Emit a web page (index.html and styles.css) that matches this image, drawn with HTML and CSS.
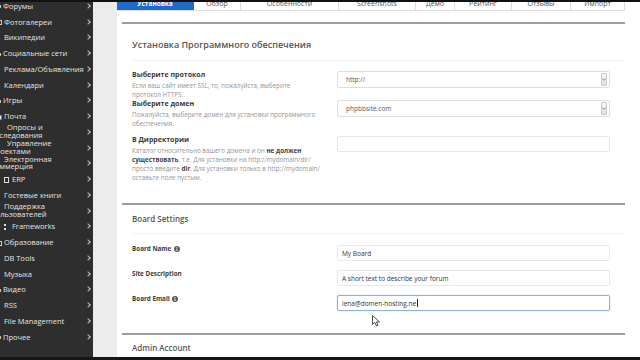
FILE: index.html
```html
<!DOCTYPE html>
<html lang="ru">
<head>
    <meta charset="UTF-8">
    <meta name="viewport" content="width=device-width, initial-scale=1.0">
    <title>Установка Программного обеспечения</title>
    <link rel="stylesheet" href="styles.css">
</head>
<body>
    <div class="topbar"></div>
    <div class="main">
        <div class="sidebar">
            <ul class="menu">
                <li class="item"><span class="txt ind"><i class="ic dot"></i>Форумы</span><span class="chev"></span></li>
                <li class="item"><span class="txt ind"><i class="ic sq"></i>Фотогалереи</span><span class="chev"></span></li>
                <li class="item"><span class="txt">Википедии</span><span class="chev"></span></li>
                <li class="item"><span class="txt ind"><i class="ic dot"></i>Социальные сети</span><span class="chev"></span></li>
                <li class="item"><span class="txt">Реклама/Объявления</span><span class="chev"></span></li>
                <li class="item"><span class="txt">Календари</span><span class="chev"></span></li>
                <li class="item"><span class="txt ind"><i class="ic dot"></i>Игры</span><span class="chev"></span></li>
                <li class="item"><span class="txt ind"><i class="ic sq red"></i>Почта</span><span class="chev"></span></li>
                <li class="item"><span class="txt two wide">Опросы и<br>исследования</span><span class="chev"></span></li>
                <li class="item"><span class="txt two wide">Управление<br>проектами</span><span class="chev"></span></li>
                <li class="item"><span class="txt two">Электронная<br>коммерция</span><span class="chev"></span></li>
                <li class="item"><span class="txt far"><i class="ic box"></i>ERP</span><span class="chev"></span></li>
                <li class="item"><span class="txt">Гостевые книги</span><span class="chev"></span></li>
                <li class="item"><span class="txt two">Поддержка<br>пользователей</span><span class="chev"></span></li>
                <li class="item"><span class="txt far"><i class="ic bars"></i>Frameworks</span><span class="chev"></span></li>
                <li class="item"><span class="txt ind"><i class="ic sq"></i>Образование</span><span class="chev"></span></li>
                <li class="item"><span class="txt">DB Tools</span><span class="chev"></span></li>
                <li class="item"><span class="txt">Музыка</span><span class="chev"></span></li>
                <li class="item"><span class="txt ind"><i class="ic dot"></i>Видео</span><span class="chev"></span></li>
                <li class="item"><span class="txt">RSS</span><span class="chev"></span></li>
                <li class="item"><span class="txt">File Management</span><span class="chev"></span></li>
                <li class="item"><span class="txt ind"><i class="ic dot"></i>Прочее</span><span class="chev"></span></li>
            </ul>
        </div>
        <div class="gutter"></div>
        <div class="panel">
            <ul class="tabs">
                <li class="tab active">Установка</li>
                <li class="tab">Обзор</li>
                <li class="tab">Особенности</li>
                <li class="tab">Screenshots</li>
                <li class="tab">Демо</li>
                <li class="tab">Рейтинг</li>
                <li class="tab">Отзывы</li>
                <li class="tab">Импорт</li>
            </ul>

            <div class="section">
                <div class="section-head">Установка Программного обеспечения</div>
                <div class="rows">
                    <div class="row">
                        <div>
                            <div class="lbl">Выберите протокол</div>
                            <div class="desc">Если ваш сайт имеет SSL, то, пожалуйста, выберите<br>протокол HTTPS.</div>
                        </div>
                        <div class="field select">http://<span class="arrow"><svg width="4" height="3" viewBox="0 0 4 3"><path d="M0.3 0.5 L2 2.4 L3.7 0.5" fill="none" stroke="#777" stroke-width="0.8"/></svg></span></div>
                    </div>
                    <div class="row">
                        <div>
                            <div class="lbl">Выберите домен</div>
                            <div class="desc">Пожалуйста, выберите домен для установки программного<br>обеспечения.</div>
                        </div>
                        <div class="field select">phpbbsite.com<span class="arrow"><svg width="4" height="3" viewBox="0 0 4 3"><path d="M0.3 0.5 L2 2.4 L3.7 0.5" fill="none" stroke="#777" stroke-width="0.8"/></svg></span></div>
                    </div>
                    <div class="row spaced">
                        <div>
                            <div class="lbl">В Дирректории</div>
                            <div class="desc">Каталог относительно вашего домена и он <b>не должен</b><br><b>существовать</b>, т.е. Для установки на http://mydomain/dir/<br>просто введите <b>dir</b>. Для установки только в http://mydomain/<br>оставьте поле пустым.</div>
                        </div>
                        <div class="field input"></div>
                    </div>
                </div>
            </div>

            <div class="section board">
                <div class="section-head compact">Board Settings</div>
                <div class="rows fixed">
                    <div class="row">
                        <div class="lbl latin">Board Name <svg class="info" width="6" height="6" viewBox="0 0 6 6"><circle cx="3" cy="3" r="3" fill="#5a5a5a"/><rect x="2.5" y="2.5" width="1" height="2.4" fill="#fff"/><circle cx="3" cy="1.5" r="0.55" fill="#fff"/></svg></div>
                        <div class="field input">My Board</div>
                    </div>
                    <div class="row">
                        <div class="lbl latin">Site Description</div>
                        <div class="field input">A short text to describe your forum</div>
                    </div>
                    <div class="row">
                        <div class="lbl latin">Board Email <svg class="info" width="6" height="6" viewBox="0 0 6 6"><circle cx="3" cy="3" r="3" fill="#5a5a5a"/><rect x="2.5" y="2.5" width="1" height="2.4" fill="#fff"/><circle cx="3" cy="1.5" r="0.55" fill="#fff"/></svg></div>
                        <div class="field input focus">lena@domen-hosting.ne<span class="caret"></span></div>
                    </div>
                </div>
            </div>

            <div class="section">
                <div class="section-head last">Admin Account</div>
            </div>
        </div>
    </div>
    <div class="bottombar"></div>

    <svg class="cursor" width="9" height="12" viewBox="0 0 9 12"><path d="M0.5 0.5 L0.5 9.5 L2.8 7.4 L4.5 11 L6 10.3 L4.4 6.9 L7.5 6.9 Z" fill="#fff" stroke="#222" stroke-width="0.8" stroke-linejoin="round"/></svg>
</body>
</html>
```

FILE: styles.css
```css
* {
    box-sizing: border-box;
}
body {
    margin: 0;
    width: 640px;
    height: 360px;
    overflow: hidden;
    position: relative;
    background: #111;
    font-family: "Open Sans", "DejaVu Sans", sans-serif;
}
.topbar {
    height: 2px;
    background: #111;
}
.bottombar {
    height: 3px;
    background: #151515;
}
.main {
    display: flex;
    height: 355px;
    overflow: hidden;
    background: #ececec;
}

/* sidebar */
.sidebar {
    flex: 0 0 93px;
    background: #2e2e2e;
    overflow: hidden;
}
.menu {
    list-style: none;
    margin: -4px 0 0 -9px;
    padding: 0;
    width: 102px;
}
.item {
    display: flex;
    align-items: center;
    height: 15.75px;
    color: #e4e4e4;
    font-size: 7.5px;
}
.item .txt {
    flex: 1;
    line-height: 8px;
    white-space: nowrap;
    text-indent: 13px;
}
.item .txt.two {
    line-height: 7.5px;
}
.item .txt.ind {
    text-indent: 8px;
}
.item .txt.wide {
    text-indent: 16px;
}
.item .txt.far {
    text-indent: 13px;
}
.ic {
    display: inline-block;
    vertical-align: middle;
    text-indent: 0;
    margin-right: 2px;
}
.ic.dot {
    width: 2px;
    height: 3px;
    background: #ddd;
    border-radius: 1px;
}
.ic.sq {
    width: 3px;
    height: 5px;
    border: 1px solid #ccc;
}
.ic.red {
    border-color: #c55;
    background: #eee;
}
.ic.box {
    width: 5px;
    height: 6px;
    border: 1px solid #ddd;
    margin-right: 3px;
}
.ic.bars {
    width: 5px;
    height: 6px;
    border-left: 2px dotted #ddd;
    margin-right: 3px;
}
.chev {
    width: 4px;
    height: 4px;
    border-top: 1px solid #bdbdbd;
    border-right: 1px solid #bdbdbd;
    transform: rotate(45deg);
    margin-right: 3px;
}

.gutter {
    flex: 0 0 24px;
}

/* content panel */
.panel {
    flex: 0 0 519px;
    background: #fff;
    border-right: 1px solid #c9c9c9;
    padding: 0 15px 0 5px;
}
.tabs {
    display: grid;
    grid-template-columns: 77px 47px 98px 77px 39px 57px 59px 54px;
    list-style: none;
    margin: -5px 0 11px -5px;
    padding: 0;
    width: 508px;
    height: 14px;
    border-bottom: 1px solid #ddd;
}
.tab {
    border-right: 1px solid #ddd;
    text-align: center;
    line-height: 13px;
    font-size: 7px;
    color: #555;
}
.tab.active {
    background: #1d6cc9;
    border-right-color: #1d6cc9;
    color: #fff;
    font-weight: 700;
    font-size: 6.5px;
}

.section {
    border-top: 2px solid #9c9c9c;
    padding-bottom: 21px;
}
.section.board {
    padding-bottom: 14px;
}
.section-head {
    margin-left: 10px;
    padding: 14px 0 8px;
    line-height: 14px;
    font-size: 9px;
    font-weight: 600;
    color: #555;
    border-bottom: 1px solid #f1f1f1;
}
.section-head.compact {
    padding: 7px 0;
    font-size: 8px;
}
.section-head.last {
    padding: 6px 0 0;
    font-size: 8px;
    border-bottom: none;
}

.rows {
    padding: 9px 0 0 10px;
}
.rows.fixed {
    padding-top: 10px;
}
.row {
    display: grid;
    grid-template-columns: 180px 273px;
    column-gap: 25px;
    align-items: start;
}
.row.spaced {
    margin-top: 7px;
}
.rows.fixed .row {
    height: 25px;
}
.lbl {
    font-size: 7px;
    font-weight: 700;
    line-height: 10px;
    color: #3c3c3c;
    white-space: nowrap;
}
.lbl.latin {
    font-size: 6.3px;
}
.info {
    vertical-align: -1px;
    margin-left: 1px;
}
.desc {
    margin-top: 1px;
    font-size: 6.3px;
    line-height: 9px;
    color: #959595;
    white-space: nowrap;
}
.desc b {
    color: #444;
}

.field {
    display: flex;
    align-items: center;
    height: 17px;
    margin-top: 1px;
    padding: 0 2px 0 8px;
    border: 1px solid #dedede;
    border-radius: 2px;
    background: #fff;
    font-size: 6.5px;
    color: #555;
}
.field.input {
    height: 16px;
    padding-left: 4px;
    border-color: #e8e8e8;
    color: #333;
}
.field.focus {
    border-color: #8db3dd;
    box-shadow: 0 0 2px rgba(80, 140, 210, 0.35);
}
.arrow {
    display: flex;
    align-items: center;
    justify-content: center;
    margin-left: auto;
    width: 6px;
    height: 13px;
    border: 1px solid #c8c8c8;
    border-radius: 1px;
    background: linear-gradient(#f7f7f7, #e1e1e1);
}
.caret {
    display: inline-block;
    width: 1px;
    height: 8px;
    margin-left: 0.5px;
    background: #222;
}
.cursor {
    position: absolute;
    left: 372px;
    top: 315px;
}
```
